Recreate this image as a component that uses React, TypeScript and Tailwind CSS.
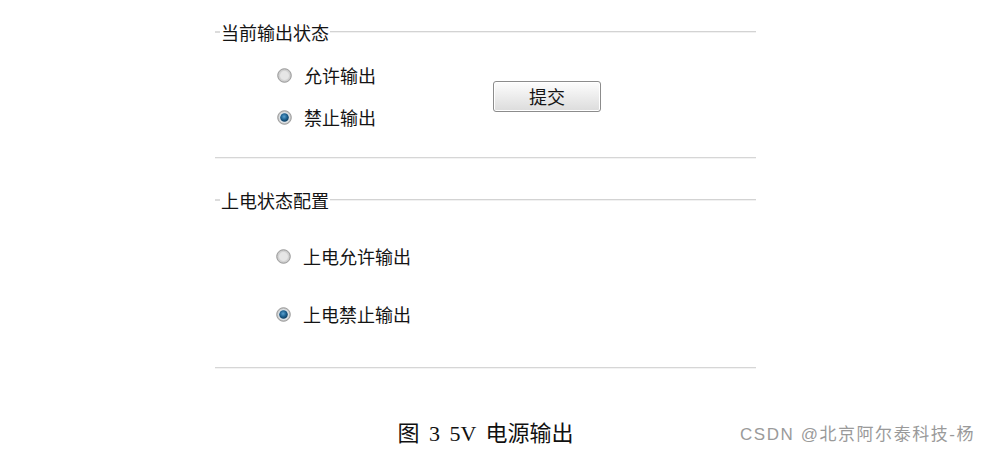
import React from "react";

const cjk = { fontFamily: '"Noto Sans CJK SC", "Noto Sans", sans-serif' };

const Radio: React.FC<{ checked?: boolean }> = ({ checked }) => (
  <svg width="15" height="15" viewBox="0 0 15 15" className="shrink-0">
    <defs>
      <radialGradient id="rOff" cx="50%" cy="50%" r="55%">
        <stop offset="0%" stopColor="#f2f2f2" />
        <stop offset="70%" stopColor="#d2d2d2" />
        <stop offset="100%" stopColor="#b4b4b4" />
      </radialGradient>
      <radialGradient id="rOn" cx="45%" cy="40%" r="65%">
        <stop offset="0%" stopColor="#5aa2d0" />
        <stop offset="55%" stopColor="#1c5f8e" />
        <stop offset="100%" stopColor="#0b3553" />
      </radialGradient>
    </defs>
    <circle cx="7.5" cy="7.5" r="6.8" fill="url(#rOff)" stroke="#9c9c9c" strokeWidth="1" />
    {checked ? (
      <>
        <circle cx="7.5" cy="7.5" r="5.2" fill="#dfe8ee" />
        <circle cx="7.5" cy="7.5" r="4.3" fill="url(#rOn)" />
      </>
    ) : (
      <circle cx="7.5" cy="7.5" r="4.4" fill="#e6e6e6" />
    )}
  </svg>
);

const Legend: React.FC<{ title: string }> = ({ title }) => (
  <div className="flex items-center h-[20px]">
    <div className="w-[5px] h-[2px] bg-[#dcdcdc]" />
    <span className="text-[18px] leading-[20px] text-[#141414] px-[1px]" style={cjk}>
      {title}
    </span>
    <div className="flex-1 flex flex-col">
      <div className="h-px bg-[#d3d3d3]" />
      <div className="h-px bg-[#f1f1f1]" />
    </div>
  </div>
);

const Rule: React.FC = () => (
  <div className="flex flex-col">
    <div className="h-px bg-[#d6d6d6]" />
    <div className="h-px bg-[#f3f3f3]" />
  </div>
);

const Option: React.FC<{ label: string; checked?: boolean }> = ({ label, checked }) => (
  <div className="flex items-center h-[24px] gap-[12px]">
    <Radio checked={checked} />
    <span className="text-[18px] leading-[24px] text-[#141414]" style={cjk}>
      {label}
    </span>
  </div>
);

export default function App() {
  return (
    <div className="w-[992px] h-[455px] bg-white relative overflow-hidden">
      <div className="ml-[215px] w-[541px] pt-[22px]">
        <Legend title="当前输出状态" />
        <div className="flex items-center mt-[21px]">
          <div className="flex flex-col gap-[18px] pl-[62px]">
            <Option label="允许输出" />
            <Option label="禁止输出" checked />
          </div>
          <button
            className="ml-[117px] w-[108px] h-[31px] rounded-[3px] border border-[#8c8c8c] bg-gradient-to-b from-[#fdfdfd] to-[#dcdcdc] text-[18px] leading-[20px] text-[#141414] shadow-[inset_0_0_0_1px_#ffffff]"
            style={cjk}
          >
            提交
          </button>
        </div>
        <div className="mt-[28px]">
          <Rule />
        </div>
        <div className="mt-[31px]">
          <Legend title="上电状态配置" />
        </div>
        <div className="flex flex-col gap-[34px] pl-[61px] mt-[34px]">
          <Option label="上电允许输出" />
          <Option label="上电禁止输出" checked />
        </div>
        <div className="mt-[41px]">
          <Rule />
        </div>
        <div
          className="mt-[52px] text-center text-[22px] leading-[26px] text-[#111] [word-spacing:4px]"
          style={{ fontFamily: '"Liberation Serif", "Noto Sans CJK SC", serif' }}
        >
          图 3 5V 电源输出
        </div>
      </div>
      <div
        className="absolute left-[740px] top-[424px] text-[17px] leading-[22px] text-[#9a9a9a] whitespace-nowrap tracking-[1.55px]"
        style={{ fontFamily: '"Liberation Sans", "Noto Sans CJK SC", sans-serif' }}
      >
        CSDN @北京阿尔泰科技-杨
      </div>
    </div>
  );
}
